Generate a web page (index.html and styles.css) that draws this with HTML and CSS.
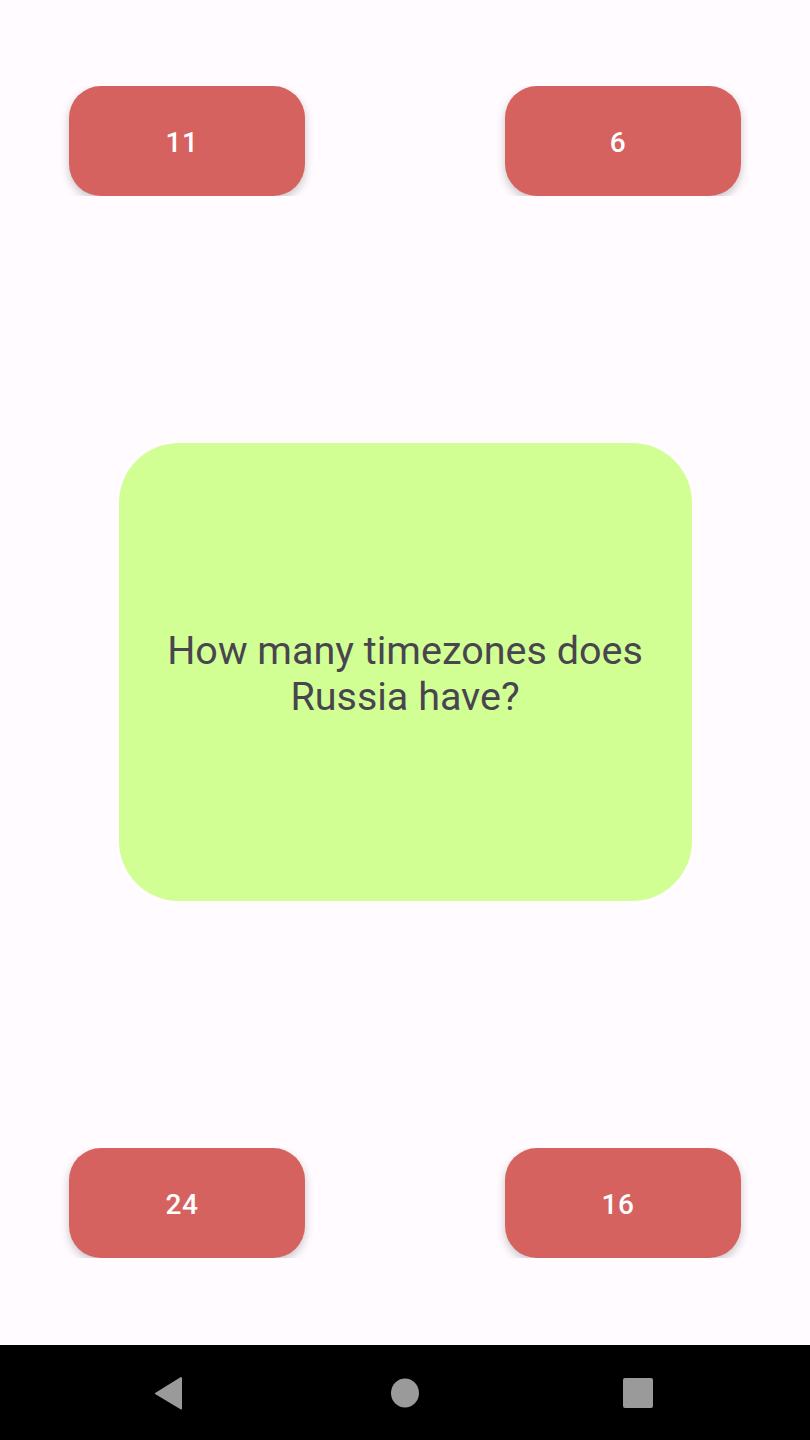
FILE: index.html
```html
<!DOCTYPE html>
<html>
<head>
<meta charset="utf-8">
<link rel="stylesheet" href="styles.css">
</head>
<body>
<div class="screen">
  <main class="content">
    <div class="row">
      <div class="btn-wrap"><button class="answer">11</button></div>
      <div class="btn-wrap"><button class="answer">6</button></div>
    </div>
    <div class="card">
      <p class="question">How many timezones does Russia have?</p>
    </div>
    <div class="row">
      <div class="btn-wrap"><button class="answer">24</button></div>
      <div class="btn-wrap"><button class="answer">16</button></div>
    </div>
  </main>
  <nav class="navbar">
    <svg class="nav-icon nav-back" width="40" height="40" viewBox="0 0 40 40"><path d="M35 5 L35 35.5 L10 20.5 Z" fill="#9a9a9a" stroke="#9a9a9a" stroke-width="2" stroke-linejoin="round"/></svg>
    <svg class="nav-icon" width="40" height="40" viewBox="0 0 40 40"><ellipse cx="20" cy="20" rx="14" ry="14.5" fill="#9a9a9a"/></svg>
    <svg class="nav-icon" width="40" height="40" viewBox="0 0 40 40"><rect x="5" y="5" width="30" height="30" rx="2" fill="#9a9a9a"/></svg>
  </nav>
</div>
</body>
</html>
```
FILE: styles.css
```css
* { box-sizing: border-box; }
html, body { margin: 0; padding: 0; }
body {
  width: 810px;
  height: 1440px;
  background: #fffbfe;
  font-family: Roboto, "Noto Sans", Arial, sans-serif;
  overflow: hidden;
}
.screen {
  display: flex;
  flex-direction: column;
  height: 1440px;
}
.content {
  height: 1345px;
  display: flex;
  flex-direction: column;
  justify-content: space-between;
  align-items: center;
  padding: 86px 0 87px;
}
.row {
  width: 100%;
  display: flex;
  justify-content: space-between;
  padding: 0 55px;
}
.btn-wrap {
  padding: 0 14px;
  overflow: hidden;
}
.answer {
  display: flex;
  align-items: center;
  justify-content: center;
  width: 236px;
  height: 110px;
  border: none;
  border-radius: 32px;
  background: #d66260;
  color: #ffffff;
  font-family: Roboto, "Noto Sans", Arial, sans-serif;
  font-size: 28px;
  font-weight: 500;
  letter-spacing: 0.5px;
  box-shadow: 0 4px 10px rgba(0,0,0,0.22);
  padding: 2px 10px 0 0;
}
.card {
  width: 573px;
  height: 458px;
  background: #d1ff94;
  border-radius: 60px;
  display: flex;
  align-items: center;
  justify-content: center;
  padding: 4px 36px 0;
}
.question {
  margin: 0;
  text-align: center;
  font-size: 39.5px;
  line-height: 46px;
  color: #49454f;
}
.navbar {
  height: 95px;
  background: #000;
  display: flex;
  align-items: center;
  gap: 193px;
  padding: 0 0 0 146px;
}
.nav-icon { display: block; }
.nav-back { margin-right: 6px; }
```
